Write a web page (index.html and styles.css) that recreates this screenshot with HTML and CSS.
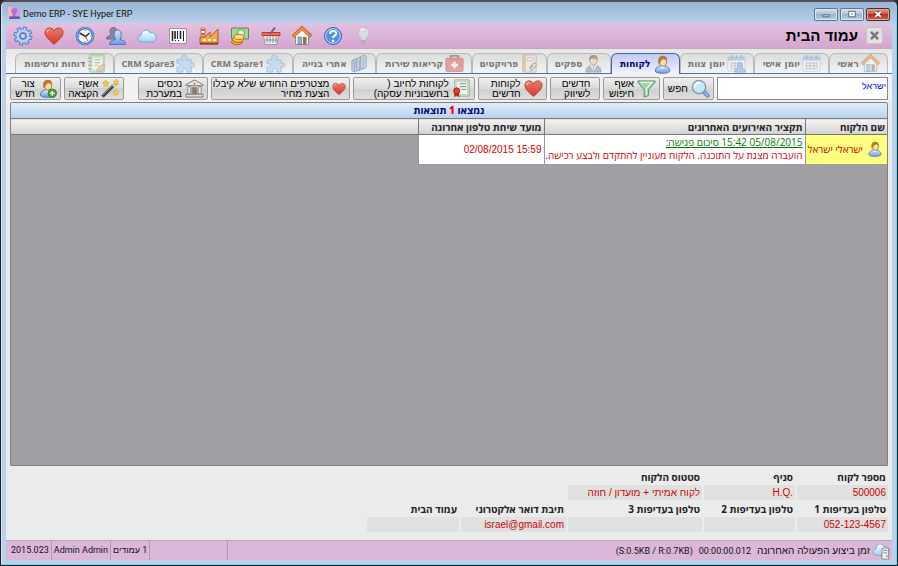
FILE: index.html
```html
<!DOCTYPE html>
<html lang="he" dir="rtl">
<head>
<meta charset="utf-8">
<title>Demo ERP - SYE Hyper ERP</title>
<link rel="stylesheet" href="styles.css">
</head>
<body>
<svg class="defs" aria-hidden="true">
  <defs>
    <linearGradient id="gBlue" x1="0" y1="0" x2="0" y2="1"><stop offset="0" stop-color="#d3e6fb"/><stop offset="1" stop-color="#6d9ae0"/></linearGradient>
    <linearGradient id="gRed" x1="0" y1="0" x2="0" y2="1"><stop offset="0" stop-color="#f07a62"/><stop offset="1" stop-color="#cf3a30"/></linearGradient>
    <linearGradient id="gSky" x1="0" y1="0" x2="0" y2="1"><stop offset="0" stop-color="#ffffff"/><stop offset="1" stop-color="#9fd3f5"/></linearGradient>
  </defs>
  <symbol id="gear" viewBox="0 0 20 20">
    <circle cx="10" cy="10" r="7.800" fill="none" stroke="#4a76bd" stroke-width="3.400" stroke-dasharray="3.700 2.426"/>
    <circle cx="10" cy="10" r="5.300" fill="none" stroke="#4a76bd" stroke-width="4.600"/>
    <circle cx="10" cy="10" r="7.400" fill="none" stroke="#b5d0f4" stroke-width="2.400" stroke-dasharray="1.900 3.912" stroke-dashoffset="-.8"/>
    <circle cx="10" cy="10" r="5.200" fill="none" stroke="#b5d0f4" stroke-width="3"/>
    <circle cx="10" cy="10" r="2.700" fill="#dcc8e4" stroke="#4a76bd"/>
  </symbol>
  <symbol id="heart" viewBox="0 0 20 20">
    <path d="M10 18.300C7 15.600 1 11 1 6.500 1 3.700 3.100 2 5.400 2 7.500 2 9.200 3.200 10 5c.8-1.800 2.500-3 4.600-3C16.900 2 19 3.700 19 6.500c0 4.500-6 9.100-9 11.800z" fill="url(#gRed)" stroke="#a8443a"/>
    <path d="M2.800 6.500C3 4.600 4.200 3.600 6 3.800" fill="none" stroke="#ffb9a5" stroke-width="1.200"/>
  </symbol>
  <symbol id="user" viewBox="0 0 20 20">
    <path d="M2.500 17c0-4 2.500-5.500 7.500-5.500s7.500 1.500 7.500 5.500c0 3-15 3-15 0z" fill="url(#gBlue)" stroke="#4b78bd"/>
    <path d="M7.500 11.800 10 14.500l2.500-2.700z" fill="#fff"/>
    <ellipse cx="10.500" cy="6.800" rx="3.800" ry="5" fill="#fbdcae" stroke="#a8702c"/>
    <path d="M6 10C4.500 5 6 .8 10 .8c3.600 0 5.400 2.200 4.700 6-1-1.600-2-2.300-4-2.300C8.500 5 8.500 8 6 10z" fill="#b97830"/>
  </symbol>
  <symbol id="puzzle" viewBox="0 0 20 20">
    <path d="M1 6h5.500C5 3 6.500 1 8.800 1s3.700 2 2.200 5h5v4c2-1.500 3.700-.5 3.700 1.500S18 14.500 16 13v6h-5c1-2.700 0-3.800-1.800-3.800S6.500 16.500 7.500 19H1v-5.500c2 1 3.500.2 3.500-1.700S3 9 1 10z" fill="#a4cdf2" stroke="#5f94cc"/>
  </symbol>
  <symbol id="calendar" viewBox="0 0 20 20">
    <rect x="1" y="3" width="18" height="15" rx="1" fill="#fff" stroke="#a3b4c8"/>
    <path d="M1 3h18v4H1z" fill="#8fb9ea"/>
    <path d="M5 1v4M10 1v4M15 1v4" stroke="#6d95c8" stroke-width="1.400"/>
    <path d="M4 9.500h12M4 12.500h12M4 15.500h12M4.500 9v7M8.500 9v7M12.500 9v7M16 9v7" stroke="#8797ae"/>
  </symbol>
  <symbol id="house" viewBox="0 0 20 20">
    <path d="M3.500 9v9.500h13V9L10 3z" fill="#f7f7f4" stroke="#8b8b8b"/>
    <path d="M1 10.500 10 2l9 8.500" fill="none" stroke="#b5591c" stroke-width="3.400"/>
    <path d="M1.400 10.200 10 2.200l8.600 8" fill="none" stroke="#f5923a" stroke-width="2"/>
    <path d="M6 11h3.500v7H6z" fill="#86b6e8" stroke="#777" stroke-width=".7"/><path d="M11 11h3.500v7H11z" fill="#9a6b48"/>
  </symbol>
</svg>

<div class="window">
  <header class="titlebar" dir="ltr">
    <svg class="appicon" viewBox="0 0 12 12"><path d="M0 0h12v12H0z" fill="#c9a0e8"/><path d="M0 0h4l2 5-2 7H0z" fill="#f3b4c4"/><path d="M4 2c4-2 7 0 5 3l-2 3 3 2H3l2-2-2-4z" fill="#a875d0"/><path d="M1 9.500h11V12H1z" fill="#7d52ae"/></svg>
    <span class="apptitle">Demo ERP - SYE Hyper ERP</span>
    <div class="controls">
      <button class="ctl" aria-label="Minimize"><svg viewBox="0 0 22 12"><path d="M7.500 6.500h7v2h-7z" fill="#fff" stroke="#4c5b70"/></svg></button>
      <button class="ctl" aria-label="Maximize"><svg viewBox="0 0 22 12"><path d="M7.500 2.500h7v6h-7z" fill="#fff" stroke="#4c5b70"/><path d="M10 5h2v1h-2z" fill="#4c5b70"/></svg></button>
      <button class="ctl close" aria-label="Close"><svg viewBox="0 0 22 12"><path d="m8 3 6 5.500m0-5.500L8 8.500" stroke="#60302c" stroke-width="3.600"/><path d="m8 3 6 5.500m0-5.500L8 8.500" stroke="#fff" stroke-width="2"/></svg></button>
    </div>
  </header>

  <div class="app">
    <div class="banner">
      <button class="closepage" aria-label="סגור"><svg viewBox="0 0 17 17"><path d="m4.500 4.500 8 8m0-8-8 8" stroke="#777" stroke-width="2.800"/></svg></button>
      <h1>עמוד הבית</h1>
      <nav class="tools" dir="ltr">
        <button aria-label="הגדרות"><svg><use href="#gear"/></svg></button>
        <button aria-label="מועדפים"><svg><use href="#heart"/></svg></button>
        <button aria-label="שעון"><svg viewBox="0 0 20 20"><circle cx="10" cy="10" r="8" fill="#f7fafd" stroke="#3c70c0" stroke-width="2.600"/><circle cx="10" cy="10" r="8.200" fill="none" stroke="#86b2ee"/><path d="M10 3.500v1.500M10 15v1.500M3.500 10H5M15 10h1.500" stroke="#7a8798"/><path d="m4.500 7 6 3.500 4-3.500" fill="none" stroke="#333" stroke-width="1.600"/><path d="m10 10 3 5" stroke="#d8442f"/></svg></button>
        <button aria-label="משתמשים"><svg viewBox="0 0 20 20"><path d="M.5 13c0-3 2.500-3 4.500-4-2-4-1-7.500 2.500-7.500S12 5 10 9l3 4z" fill="#8e849f" stroke="#746c8c"/><path d="M3.500 18.500c0-4 3-4 6-5-2.500-4.500-1.500-9.500 2-9.500s5 5 2.500 9.500c3 1 5.500 1 5.500 5z" fill="url(#gBlue)" stroke="#4878c4"/></svg></button>
        <button aria-label="ענן"><svg viewBox="0 0 20 20"><path d="M5 16c-5 0-5.500-6-1-6.500C4 4 11 2 13.200 7 17 6 19.500 9 19 12c-.3 2.500-1.500 4-4 4z" fill="url(#gSky)" stroke="#6ea8d8"/></svg></button>
        <button aria-label="ברקוד"><svg viewBox="0 0 20 20"><path d="M1.500 2.500h17v15h-17z" fill="#fff" stroke="#999"/><path d="M4.500 5v10M7 5v8M12.500 5v8" stroke="#222" stroke-width="1.600"/><path d="M9.500 5v8M15.500 5v10M10.500 14v1M7.500 14v1" stroke="#222"/></svg></button>
        <button aria-label="מפעל"><svg viewBox="0 0 20 20"><path d="M2 2h4v8H2z" fill="#fff" stroke="#b77"/><path d="M2 3h4v2H2zM2 7h4v2H2z" fill="#e8682c"/><path d="M1 18V11h5l5-5v5l5-5 3-3v15z" fill="#f4a646" stroke="#a85a22"/><path d="M4 13h3v2H4zM9 13h3v2H9zM14 13h3v2h-3z" fill="#fff1c8"/><path d="M1 17.500h18" stroke="#8b4218" stroke-width="2"/></svg></button>
        <button aria-label="כספים"><svg viewBox="0 0 20 20"><path d="M1.500 2h17v11h-17z" fill="#a6d39a" stroke="#568b55"/><circle cx="11" cy="7" r="3.500" fill="#dff0d5" stroke="#6aa267"/><ellipse cx="7" cy="16" rx="5.500" ry="2.800" fill="#eda735" stroke="#a66c18"/><ellipse cx="8" cy="13.500" rx="5.500" ry="2.800" fill="#f8c655" stroke="#a66c18"/><ellipse cx="9" cy="11" rx="5" ry="2.500" fill="#ffdf83" stroke="#b87c20"/></svg></button>
        <button aria-label="סל"><svg viewBox="0 0 20 20"><path d="M2.500 9h15L16 18.500H4z" fill="#f4f4f4" stroke="#999"/><path d="M6 10v7M9 10v7M12 10v7M15 10v7M4 14h12" stroke="#8b8b8b"/><path d="M1 6.500h18v3H1z" fill="#ef6a62" stroke="#b83a38"/><path d="m9 8 5-6.500" stroke="#666" stroke-width="2"/></svg></button>
        <button aria-label="בית"><svg><use href="#house"/></svg></button>
        <button aria-label="עזרה"><svg viewBox="0 0 20 20"><circle cx="10" cy="10" r="8.500" fill="#5a8ee0" stroke="#3565b4"/><circle cx="10" cy="10" r="7.300" fill="none" stroke="#c6dcf8"/><path d="M7 8c0-4 6.200-3.800 6.200-.5C13.200 9.500 10 9.500 10 12" fill="none" stroke="#fff" stroke-width="2"/><circle cx="10" cy="14.800" r="1.300" fill="#fff"/></svg></button>
        <button aria-label="טיפ"><svg viewBox="0 0 20 20"><path d="M7 14c0-3-3-4-3-7.500C4 3 6.500 1 9.500 1S15 3 15 6.500C15 10 12 11 12 14z" fill="#dcd8de" stroke="#c3bbc5"/><path d="M7 14h5v3.500l-1.500 1.500h-2L7 17.500z" fill="#b4afb7"/><path d="M7 4.500C8 3 9 3 10 3" stroke="#fff" stroke-width="1.500" fill="none"/></svg></button>
      </nav>
    </div>

    <nav class="tabs">
      <a href="#" class="tab"><svg><use href="#house"/></svg><span>ראשי</span></a>
      <a href="#" class="tab"><svg><use href="#calendar"/></svg><span>יומן אישי</span></a>
      <a href="#" class="tab"><svg viewBox="0 0 20 20"><use href="#calendar"/><path d="M8 19c0-3 2-3 4-4-2-3-1-6 1.500-6s4 3 2 6c2 1 4 1 4 4z" fill="#7ba6e4" stroke="#4878c4"/></svg><span>יומן צוות</span></a>
      <a href="#" class="tab active" aria-current="page"><svg><use href="#user"/></svg><span>לקוחות</span></a>
      <a href="#" class="tab"><svg viewBox="0 0 20 20"><path d="M2 19c0-5 3-7 8-7s8 2 8 7z" fill="#7c8ba0" stroke="#56657a"/><path d="m6.500 12 3.500 6 3.500-6z" fill="#fff"/><path d="m9 13 1 5 1-5z" fill="#4b7cc0"/><ellipse cx="10" cy="6.500" rx="4" ry="5" fill="#f3c99b" stroke="#987050"/><path d="M5.500 7C5 2.500 7 1 10 1s5 2 4.500 6c-1-2.500-7-3.500-9 0z" fill="#73573e"/></svg><span>ספקים</span></a>
      <a href="#" class="tab"><svg viewBox="0 0 20 20"><path d="M3 1h14v18H3z" fill="#f3e6d6" stroke="#b18b68"/><path d="M3 1h3v18H3z" fill="#cfa27a"/><path d="M8 4h6v3H8z" fill="#fff" stroke="#b99"/><path d="m10 15 4-5c2-1.500 4 0 3 2l-4 5c-1.500 1-3 0-2-1.500l3-4" fill="none" stroke="#777" stroke-width="1.200"/></svg><span>פרויקטים</span></a>
      <a href="#" class="tab"><svg viewBox="0 0 20 20"><path d="M6 5V2h8v3" fill="none" stroke="#555" stroke-width="2"/><rect x="1" y="4.500" width="18" height="14" rx="1.500" fill="#e7504a" stroke="#a83835"/><path d="M10 8v7M6.500 11.500h7" stroke="#fff" stroke-width="2.600"/></svg><span>קריאות שירות</span></a>
      <a href="#" class="tab"><svg viewBox="0 0 20 20"><path d="m3 7 4-2 3 1v11l-4 2-3-1.500z" fill="#8ea6d0" stroke="#4a628f"/><path d="m8 5 4-2 3 1v11l-4 2.500L8 16z" fill="#a2b6dc" stroke="#4a628f"/><path d="m12 3 3.500-2L18 2.500V14l-3 2-3-1z" fill="#b4c6e6" stroke="#4a628f"/><path d="M6 8v11M11 7v11M15 4v12" stroke="#526b99"/></svg><span>אתרי בנייה</span></a>
      <a href="#" class="tab latin"><svg><use href="#puzzle"/></svg><span>CRM Spare1</span></a>
      <a href="#" class="tab latin"><svg><use href="#puzzle"/></svg><span>CRM Spare3</span></a>
      <a href="#" class="tab"><svg viewBox="0 0 20 20"><path d="M3 1h15v18H3z" fill="#b9dfa9" stroke="#65a05a"/><path d="M6 4h10v12H6z" fill="#f5fbf1"/><path d="M1 4h4M1 8h4M1 12h4M1 16h4" stroke="#777" stroke-width="1.400"/><path d="M8 6h6M8 9h6M8 12h4" stroke="#7fae77" stroke-width="1.400"/><path d="M11 19c-1-4 2-7 7-8 1 4-1 8-7 8z" fill="#e8a85a" stroke="#ad7432"/></svg><span>דוחות ורשימות</span></a>
    </nav>

    <div class="actions">
      <input class="search" type="text" aria-label="חיפוש לקוח" value="ישראל">
      <button class="act"><svg viewBox="0 0 20 20"><path d="m14.500 14.500 3 3" stroke="#4f7fc4" stroke-width="4.400" stroke-linecap="round"/><path d="m14.500 14.500 3 3" stroke="#8fb4ea" stroke-width="2.400" stroke-linecap="round"/><circle cx="8.500" cy="8.500" r="7" fill="#c4e8fb" stroke="#8595a5" stroke-width="1.400"/><path d="M3.500 9c.5-3.500 2.500-5 6-5" stroke="#fff" stroke-width="2" fill="none"/></svg><span>חפש</span></button>
      <button class="act"><svg viewBox="0 0 20 20"><path d="M1 2h18v1.500l-7 8v6l-4.500 1.500v-7.500L1 3.500z" fill="#9dd4a9" stroke="#5c8d67"/><path d="M3.500 3.500h12L10 10v7" stroke="#e5f7e7" stroke-width="1.400" fill="none"/></svg><span>אשף<br>חיפוש</span></button>
      <button class="act plain"><span>חדשים<br>לשיווק</span></button>
      <button class="act"><svg><use href="#heart"/></svg><span>לקוחות<br>חדשים</span></button>
      <button class="act"><svg viewBox="0 0 20 20"><path d="M3 1h15v17H3z" fill="#eff6ed" stroke="#8ba58a"/><path d="M4.500 2.500h12v14h-12z" fill="none" stroke="#b7d0b5"/><path d="M8 5h7M8 8h7M10 11h5" stroke="#7b8b7b"/><path d="m3 13-1 6 3-1.500L8 19l-1-6z" fill="#c6281f"/><circle cx="5" cy="12.500" r="3.200" fill="#e24333" stroke="#9c201a"/></svg><span>לקוחות לחיוב (<br>בחשבוניות עסקה)</span></button>
      <button class="act small"><svg><use href="#heart"/></svg><span>מצטרפים החודש שלא קיבלו<br>הצעת מחיר</span></button>
      <button class="act"><svg viewBox="0 0 20 20"><path d="M1 7v-1l9-5 9 5v1z" fill="#e9e9e6" stroke="#777"/><circle cx="10" cy="4.800" r="1.200" fill="#888"/><path d="M3 8h3v8H3zM14 8h3v8h-3z" fill="#eee" stroke="#888"/><path d="M7.500 9h5v7h-5z" fill="#98785a" stroke="#888"/><path d="M1 16h18v3H1z" fill="#ddd" stroke="#777"/></svg><span>נכסים<br>במערכת</span></button>
      <button class="act apart"><svg viewBox="0 0 20 20"><path d="M1.500 18.500 16 4" stroke="#444" stroke-width="3.400"/><path d="m12.500 7.500 3.500-3.500" stroke="#ddd" stroke-width="3"/><path d="M2 17 12 7" stroke="#999"/><path d="m5 1 1 2.500 2.500.5-2 1.500.5 2.500-2-1.300L3 8l.5-2.500L1.500 4 4 3.500zM16 0l.8 2 2.200.5-1.500 1.500.3 2-1.800-1-2 1 .5-2L13 2.500l2.200-.5zM15.500 11l.8 2 2.200.5-1.500 1.500.3 2-1.800-1-2 1 .5-2-1.500-1.500 2.200-.5z" fill="#ffd348" stroke="#d89a20" stroke-width=".7"/></svg><span>אשף<br>הקצאה</span></button>
      <button class="act"><svg viewBox="0 0 20 20"><use href="#user"/><circle cx="15" cy="15" r="4.300" fill="#3faa35" stroke="#1f7a1d"/><path d="M15 12.500v5M12.500 15h5" stroke="#fff" stroke-width="1.600"/></svg><span>צור<br>חדש</span></button>
    </div>

    <main class="results">
      <div class="found">נמצאו <b>1</b> תוצאות</div>
      <table>
        <colgroup><col class="c-name"><col class="c-sum"><col class="c-date"><col></colgroup>
        <thead><tr><th>שם הלקוח</th><th>תקציר האירועים האחרונים</th><th>מועד שיחת טלפון אחרונה</th><th class="filler"></th></tr></thead>
        <tbody><tr>
          <td class="name"><div><svg><use href="#user"/></svg><span>ישראלי ישראל</span></div></td>
          <td><a href="#">05/08/2015 15:42 סיכום פגישה:</a><br>הועברה מצגת על התוכנה. הלקוח מעוניין להתקדם ולבצע רכישה.</td>
          <td class="date"><bdi dir="ltr">02/08/2015 15:59</bdi></td>
          <td class="none"></td>
        </tr></tbody>
      </table>
    </main>

    <dl class="details">
      <div><dt>מספר לקוח</dt><dd>500006</dd></div>
      <div><dt>סניף</dt><dd><bdi dir="ltr">H.Q.</bdi></dd></div>
      <div><dt>סטטוס הלקוח</dt><dd>לקוח אמיתי + מועדון / חוזה</dd></div>
      <div class="first"><dt>טלפון בעדיפות 1</dt><dd><bdi dir="ltr">052-123-4567</bdi></dd></div>
      <div><dt>טלפון בעדיפות 2</dt><dd></dd></div>
      <div><dt>טלפון בעדיפות 3</dt><dd></dd></div>
      <div><dt>תיבת דואר אלקטרוני</dt><dd>israel@gmail.com</dd></div>
      <div><dt>עמוד הבית</dt><dd></dd></div>
    </dl>

    <footer class="status">
      <svg viewBox="0 0 20 20"><path d="M5 15c-5 0-5-6-1-6.500C4 3 10 1 12.500 6 16 5 19 8 18 11c0 2.500-1.500 4-4 4z" fill="url(#gSky)" stroke="#6ea8d8"/><path d="M10.500 7.500h7V19h-7z" fill="#f1f1ee" stroke="#888"/><path d="M12 10h4M12 12.500h4" stroke="#888"/><path d="M15 16h1.500" stroke="#3a3" stroke-width="1.500"/></svg>
      <span class="time">זמן ביצוע הפעולה האחרונה</span>
      <span dir="ltr">00:00:00.012</span>
      <span dir="ltr">(S:0.5KB / R:0.7KB)</span>
      <div class="cells" dir="ltr">
        <span>2015.023</span><span>Admin Admin</span><span dir="rtl">1 עמודים</span><span class="blank"></span>
      </div>
    </footer>
  </div>
</div>
</body>
</html>
```
FILE: styles.css
```css
* { box-sizing: border-box; }
html { background: #2b2b2f; }
body { margin: 0; font: 10px/12px "Liberation Sans", sans-serif; color: #111; }
button, input { font: inherit; color: inherit; margin: 0; padding: 0; }
.defs { position: absolute; width: 0; height: 0; }

.window {
  min-height: 100vh; display: flex; flex-direction: column;
  padding: 0 5px 5px; background: #b9d1ea;
  border: 1px solid #1d1d22; border-top: 2px solid #4f4f55; border-radius: 6px 6px 0 0;
  box-shadow: inset -1px -1px #5adcf5, inset 1px 1px #d8e8f8;
}
.titlebar {
  display: flex; align-items: center; height: 21px; margin: 0 -4px; padding: 0 6px; gap: 3px;
  background: linear-gradient(#98b4d2, #b8d0ea); border-radius: 5px 5px 0 0;
}
.appicon { width: 12px; height: 12px; }
.apptitle { flex: 1; padding-top: 3px; font: 9px/12px Roboto, "Liberation Sans", sans-serif; }
.controls { display: flex; gap: 2px; padding-top: 3px; }
.ctl { width: 24px; height: 13px; border: 1px solid #5d7390; border-radius: 2px; background: linear-gradient(#d5e3f2, #a9bfd8 50%, #9ab4d2 50%, #b9d0e8); box-shadow: inset 0 0 0 1px #dbe8f5; }
.ctl svg { display: block; width: 22px; height: 11px; }
.close { border-color: #5c2620; background: linear-gradient(#dd9a8c, #c8503e 50%, #b5301c 50%, #cb6a4c); box-shadow: inset 0 0 0 1px #e0a79c; }

.app { flex: 1; display: flex; flex-direction: column; background: #ebebeb; }
.banner { display: flex; align-items: center; height: 26px; padding: 0 9px 0 7px; background: linear-gradient(#e2c2e0, #d3a5d0); border-bottom: 1px solid #c9a4c7; }
.closepage { width: 17px; height: 17px; border: 1px solid #c4c4c4; border-radius: 2px; background: #e3e1e3; }
.closepage svg { display: block; width: 15px; height: 15px; }
h1 { margin: 0 8px 0 auto; font: bold 15px/20px "Liberation Sans", sans-serif; color: #000; }
.tools { display: flex; gap: 11px; }
.tools button { border: 0; background: none; width: 20px; height: 20px; }
.tools svg { display: block; width: 20px; height: 20px; }

.tabs {
  display: grid; padding: 4px 4px 0 9px; border-bottom: 1px solid #4674ac; background: linear-gradient(#e6e6e6, #f7f7f7);
  grid-template-columns: 59fr 75fr 74fr 68fr 64fr 75fr 96fr 83fr 89fr 89fr 99fr;
}
.tab {
  display: flex; align-items: center; gap: 2px; height: 20px; padding: 0 7px; overflow: hidden; white-space: nowrap;
  border: 1px solid #b9b9b9; border-bottom: 0; border-radius: 6px 6px 0 0;
  background: linear-gradient(#dcdcdc, #f3f3f3); color: #777; text-decoration: none;
  font: bold 10px/18px "DejaVu Sans Condensed", "Liberation Sans", sans-serif;
}
.tab.latin { font: bold 9px/18px "Noto Sans", sans-serif; }
.tab svg { width: 19px; height: 19px; flex: none; opacity: .5; }
.tab.active { color: #000080; border-color: #3c68a4; background: linear-gradient(#c3c6f5, #f2f2ff); margin-bottom: -1px; height: 21px; }
.tab.active svg { opacity: 1; }

.actions {
  display: grid; gap: 3px; padding: 3px 4px 2px; height: 28px; background: #f1f1f1;
  grid-template-columns: 172fr 51fr 57fr 51fr 69fr 122fr 140fr 70fr 72fr 51fr;
}
.actions > * { min-width: 0; }
.search { width: 100%; border: 1px solid #8a8a8a; background: #fff; color: #0000d8; padding: 0 1px 5px; font-size: 9px; }
.act {
  display: flex; align-items: center; gap: 3px; padding: 0 3px; white-space: nowrap; text-align: start;
  border: 1px solid #9a9a9a; border-radius: 2px; background: linear-gradient(#f0f0f0, #dadada 50%, #cecece 50%, #dedede);
  font: 10px/10px "Liberation Sans", sans-serif; color: #000;
}
.act svg { width: 19px; height: 19px; flex: none; }
.act.small svg { width: 14px; height: 14px; }
.act.plain { padding: 0 9px; }
.act.apart { margin-right: 11px; }

.results { flex: 1; margin: 0 4px; border: 1px solid #808080; background: #a09fa4; border-radius: 2px 2px 0 0; }
.found { height: 15px; text-align: center; font: bold 10px/14px "Open Sans", "Liberation Sans", sans-serif; color: #000080; background: linear-gradient(#e0edf8, #b7d2ec); }
.found b { color: #f00; }
table { width: 100%; table-layout: fixed; border-collapse: collapse; }
.c-name { width: 82px; } .c-sum { width: 261px; } .c-date { width: 126px; }
th {
  height: 16px; padding: 0 2px; text-align: start; font: bold 10px/14px "Open Sans", "Liberation Sans", sans-serif; color: #222; white-space: nowrap;
  background: linear-gradient(#f2f2f2, #d2d2d2); border: solid #777; border-width: 1px 0 1px 1px;
}
th.filler { border-left: 0; }
td { height: 29px; padding: 0 2px; border-left: 1px solid #999; background: #fff; color: #d00000; font: 10px/13px "Open Sans", "Liberation Sans", sans-serif; white-space: nowrap; }
td a { color: #008000; }
td.name { background: #ffff80; }
td.name div { display: flex; align-items: center; gap: 4px; padding-right: 2px; }
td.name svg { width: 16px; height: 16px; flex: none; }
td.none { background: none; border: 0; }
td.date, dd { font: 10px/15px "Liberation Sans", sans-serif; }

.details { display: grid; margin: 0; padding: 3px 4px 8px; gap: 1px 2px; grid-template-columns: 91px 91px 134px 105px 92px; }
.details div { min-width: 0; }
.details .first { grid-column: 1; }
dt { font: bold 10px/16px "Open Sans", "Liberation Sans", sans-serif; color: #222; padding: 0 2px; white-space: nowrap; }
dd { margin: 0; height: 15px; padding: 0 2px; background: #e0e0e0; color: #d00000; white-space: nowrap; }

.status { display: flex; align-items: center; height: 20px; padding: 0 1px 0 2px; gap: 6px; background: #dbb8da; border-top: 1px solid #b0a8b0; font: 9px/12px Roboto, "Liberation Sans", sans-serif; }
.status > svg { width: 19px; height: 19px; }
.status .time { margin-right: -4px; font: 10px/12px "Liberation Sans", sans-serif; }
.cells { display: flex; align-self: stretch; margin-right: auto; padding-left: 1px; line-height: 18px; }
.cells span { padding: 0 2px; border-right: 1px solid #b09ab0; }
.cells .blank { width: 78px; }
```
